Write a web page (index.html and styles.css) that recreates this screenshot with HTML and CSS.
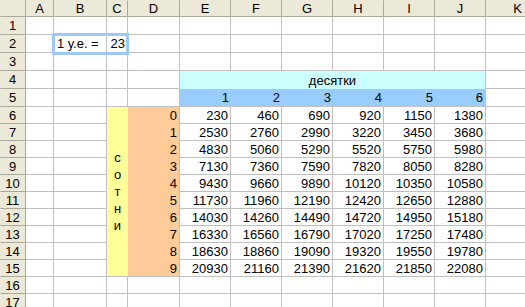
FILE: index.html
```html
<!DOCTYPE html>
<html lang="ru">
<head>
<meta charset="UTF-8" />
<meta name="viewport" content="width=device-width, initial-scale=1.0" />
<title>Курс у.е.</title>
<link rel="stylesheet" href="styles.css">
</head>
<body>
<div class="sheet">
    <!-- заголовки столбцов -->
    <div class="hd"></div><div class="hd">A</div><div class="hd">B</div><div class="hd">C</div><div class="hd">D</div><div class="hd">E</div><div class="hd">F</div><div class="hd">G</div><div class="hd">H</div><div class="hd">I</div><div class="hd">J</div><div class="hd">K</div>

    <div class="hd">1</div><div></div><div></div><div></div><div></div><div></div><div></div><div></div><div></div><div></div><div></div><div></div>
    <div class="hd">2</div><div></div><div>1 у.е. =</div><div class="num">23</div><div></div><div></div><div></div><div></div><div></div><div></div><div></div><div></div>
    <div class="hd">3</div><div></div><div></div><div></div><div></div><div></div><div></div><div></div><div></div><div></div><div></div><div></div>
    <div class="hd">4</div><div></div><div></div><div></div><div></div><div></div>
    <div class="hd">5</div><div></div><div></div><div></div><div></div><div></div>

    <!-- десятки -->
    <div class="tens">
        <div class="tens-title">десятки</div>
        <div class="tens-row">
            <span>1</span><span>2</span><span>3</span><span>4</span><span>5</span><span>6</span>
        </div>
    </div>

    <!-- сотни -->
    <div class="hundreds">
        <div class="hundreds-title">
            <span>с</span><span>о</span><span>т</span><span>н</span><span>и</span>
        </div>
        <div class="hundreds-col">
            <span>0</span><span>1</span><span>2</span><span>3</span><span>4</span><span>5</span><span>6</span><span>7</span><span>8</span><span>9</span>
        </div>
    </div>

    <div class="hd">6</div><div></div><div></div><div class="num">230</div><div class="num">460</div><div class="num">690</div><div class="num">920</div><div class="num">1150</div><div class="num">1380</div><div></div>
    <div class="hd">7</div><div></div><div></div><div class="num">2530</div><div class="num">2760</div><div class="num">2990</div><div class="num">3220</div><div class="num">3450</div><div class="num">3680</div><div></div>
    <div class="hd">8</div><div></div><div></div><div class="num">4830</div><div class="num">5060</div><div class="num">5290</div><div class="num">5520</div><div class="num">5750</div><div class="num">5980</div><div></div>
    <div class="hd">9</div><div></div><div></div><div class="num">7130</div><div class="num">7360</div><div class="num">7590</div><div class="num">7820</div><div class="num">8050</div><div class="num">8280</div><div></div>
    <div class="hd">10</div><div></div><div></div><div class="num">9430</div><div class="num">9660</div><div class="num">9890</div><div class="num">10120</div><div class="num">10350</div><div class="num">10580</div><div></div>
    <div class="hd">11</div><div></div><div></div><div class="num">11730</div><div class="num">11960</div><div class="num">12190</div><div class="num">12420</div><div class="num">12650</div><div class="num">12880</div><div></div>
    <div class="hd">12</div><div></div><div></div><div class="num">14030</div><div class="num">14260</div><div class="num">14490</div><div class="num">14720</div><div class="num">14950</div><div class="num">15180</div><div></div>
    <div class="hd">13</div><div></div><div></div><div class="num">16330</div><div class="num">16560</div><div class="num">16790</div><div class="num">17020</div><div class="num">17250</div><div class="num">17480</div><div></div>
    <div class="hd">14</div><div></div><div></div><div class="num">18630</div><div class="num">18860</div><div class="num">19090</div><div class="num">19320</div><div class="num">19550</div><div class="num">19780</div><div></div>
    <div class="hd">15</div><div></div><div></div><div class="num">20930</div><div class="num">21160</div><div class="num">21390</div><div class="num">21620</div><div class="num">21850</div><div class="num">22080</div><div></div>

    <div class="hd">16</div><div></div><div></div><div></div><div></div><div></div><div></div><div></div><div></div><div></div><div></div><div></div>
    <div class="hd">17</div><div></div><div></div><div></div><div></div><div></div><div></div><div></div><div></div><div></div><div></div><div></div>

    <!-- выделение B2:C2 -->
    <div class="selection"></div>
</div>
</body>
</html>
```

FILE: styles.css
```css
body {
    margin: 0;
    overflow: hidden;
    font-family: "Liberation Sans", Arial, sans-serif;
    font-size: 13px;
    color: #000;
    background-color: #fff;
}

.sheet {
    position: relative;
    display: grid;
    grid-template-columns: 25px 27px 52px 20px 51px repeat(6, 50px) 63px;
    grid-template-rows: 16px repeat(5, 17px) repeat(12, 16px);
    gap: 1px;
    width: max-content;
    background-color: #c0c0c0;
}

.sheet > div {
    display: flex;
    align-items: center;
    padding: 0 3px;
    background-color: #fff;
    white-space: nowrap;
    overflow: hidden;
}

.sheet > .hd {
    justify-content: center;
    padding: 0;
    background-color: #ece9d8;
    box-shadow: 1px 1px 0 #aca899;
    overflow: visible;
}

.sheet > .num {
    justify-content: flex-end;
    padding: 0 2px 0 0;
}

.sheet > .tens {
    grid-column: 6 / span 6;
    grid-row: 5 / span 2;
    display: grid;
    grid-template-rows: 18px 17px;
    align-items: stretch;
    padding: 0;
}

.tens-title {
    display: flex;
    align-items: center;
    justify-content: center;
    background-color: #ccffff;
}

.tens-row {
    display: grid;
    grid-template-columns: repeat(5, 51px) 50px;
    background-color: #99ccff;
}

.tens-row span,
.hundreds-col span {
    display: flex;
    align-items: center;
    justify-content: flex-end;
    padding-right: 2px;
}

.sheet > .hundreds {
    grid-column: 4 / span 2;
    grid-row: 7 / span 10;
    display: grid;
    grid-template-columns: 21px 51px;
    align-items: stretch;
    padding: 0;
}

.hundreds-title {
    display: flex;
    flex-direction: column;
    align-items: center;
    justify-content: center;
    line-height: 17px;
    background-color: #ffff99;
}

.hundreds-col {
    display: grid;
    grid-template-rows: repeat(9, 17px) 16px;
    background-color: #ffcc99;
}

.sheet > .selection {
    position: absolute;
    left: 52px;
    top: 33px;
    width: 71px;
    height: 16px;
    padding: 0;
    border: 3px solid #a0c8f6;
    background-color: transparent;
    pointer-events: none;
}
```
